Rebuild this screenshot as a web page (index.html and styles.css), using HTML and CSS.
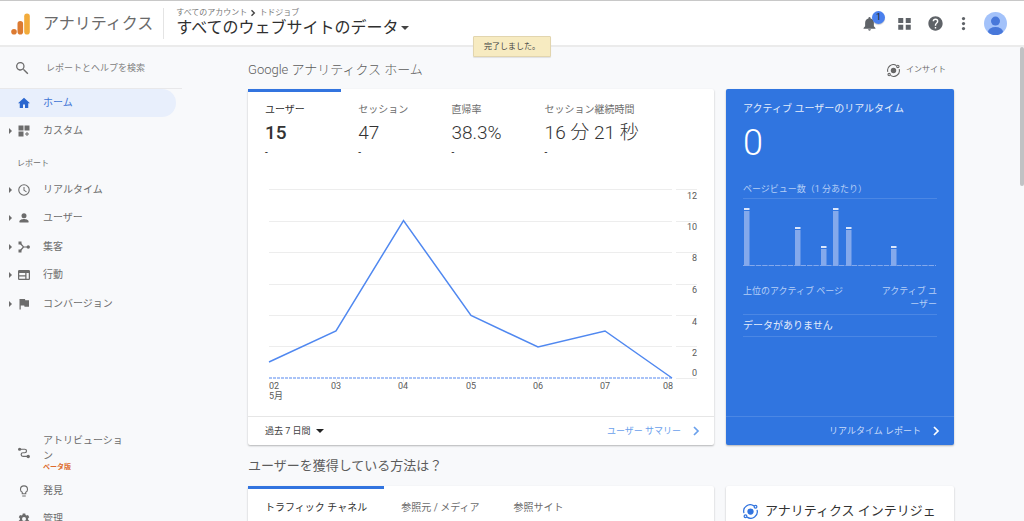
FILE: index.html
```html
<!DOCTYPE html>
<html lang="ja">
<head>
    <meta charset="UTF-8">
    <meta name="viewport" content="width=device-width, initial-scale=1.0">
    <title>アナリティクス</title>
    <link rel="stylesheet" href="styles.css">
</head>
<body>
    <header class="topbar">
        <a class="brand" href="#">
            <svg class="logo" viewBox="0 0 20 22">
                <circle cx="3" cy="18.7" r="2.8" fill="#dc7a31"/>
                <rect x="6.5" y="8" width="5.6" height="13.5" rx="2.8" fill="#dc7a31"/>
                <rect x="13.2" y="0.5" width="5.6" height="21" rx="2.8" fill="#f2ab3b"/>
            </svg>
            <span>アナリティクス</span>
        </a>
        <div class="account">
            <div class="account-path">すべてのアカウント
                <svg viewBox="0 0 6 8"><path d="M1.5 1.2L4.3 4L1.5 6.8" fill="none" stroke="#444" stroke-width="1.4"/></svg>
                トドジョブ</div>
            <button class="account-view">すべてのウェブサイトのデータ<span class="caret"></span></button>
        </div>
        <div class="actions">
            <button class="icon-btn bell" aria-label="通知">
                <svg viewBox="0 0 24 24"><path d="M12 23.5c1.3 0 2.2-.9 2.2-2.2H9.8c0 1.3.9 2.2 2.2 2.2zM19 16.5V11c0-3.6-2-6.3-5.3-7V3.2a1.7 1.7 0 0 0-3.4 0V4C7 4.700 5 7.400 5 11v5.500L2.500 19v1.200h19V19z"/></svg>
                <span class="badge">1</span>
            </button>
            <button class="icon-btn" aria-label="アプリ">
                <svg viewBox="0 0 24 24"><path d="M2 3h8v8H2zM14 3h8v8h-8zM2 14h8v8H2zM14 14h8v8h-8z"/></svg>
            </button>
            <button class="icon-btn" aria-label="ヘルプ">
                <svg viewBox="1.5 1.5 21 21"><path d="M12 2C6.5 2 2 6.5 2 12s4.5 10 10 10 10-4.5 10-10S17.5 2 12 2zm1 17h-2v-2h2v2zm2.1-7.8l-.9.9c-.7.8-1.2 1.4-1.2 2.9h-2v-.5c0-1.1.4-2.1 1.2-2.8l1.2-1.3c.4-.3.6-.8.6-1.4a2 2 0 0 0-4 0H8a4 4 0 0 1 8 0c0 .9-.4 1.7-.9 2.2z"/></svg>
            </button>
            <button class="icon-btn dots" aria-label="その他">
                <svg viewBox="0 0 24 24"><circle cx="12" cy="4" r="2.6"/><circle cx="12" cy="12" r="2.6"/><circle cx="12" cy="20" r="2.6"/></svg>
            </button>
            <button class="avatar" aria-label="アカウント">
                <svg viewBox="0 0 24 24">
                    <clipPath id="round"><circle cx="12" cy="12" r="12"/></clipPath>
                    <g clip-path="url(#round)">
                        <rect width="24" height="24" fill="#a3c2fa"/>
                        <circle cx="12" cy="9.5" r="4.7" fill="#4878da"/>
                        <ellipse cx="12" cy="20.5" rx="7.8" ry="4.8" fill="#4878da"/>
                    </g>
                </svg>
            </button>
        </div>
    </header>

    <div class="toast" role="status">完了しました。</div>

    <div class="layout">
        <nav class="sidebar">
            <label class="search">
                <svg viewBox="0 0 24 24"><path d="M15.5 14h-.8l-.3-.3A6.5 6.5 0 1 0 13.7 14.4l.3.3v.8l6 6 1.5-1.5zM9.5 14a4.5 4.5 0 1 1 0-9 4.5 4.5 0 0 1 0 9z"/></svg>
                <input type="text" placeholder="レポートとヘルプを検索" aria-label="レポートとヘルプを検索">
            </label>
            <ul class="menu">
                <li><a class="item active" href="#">
                    <span class="arrow hidden"></span>
                    <svg viewBox="0 0 24 24"><path d="M10 22v-7h4v7h6.5v-9.5H24L12 1.5 0 12.5h3.5V22z"/></svg>
                    ホーム</a></li>
                <li><a class="item" href="#">
                    <span class="arrow"></span>
                    <svg viewBox="0 0 24 24"><path d="M1 1h10v10H1zM13 1h10v10H13zM1 13h10v10H1zM17 14h2v3h3v2h-3v3h-2v-3h-3v-2h3z"/></svg>
                    カスタム</a></li>
            </ul>
            <div class="menu-title">レポート</div>
            <ul class="menu reports">
                <li><a class="item" href="#">
                    <span class="arrow"></span>
                    <svg viewBox="0 0 24 24"><circle cx="12" cy="12" r="10.5" fill="none" stroke="#6c6c6c" stroke-width="2.2"/><path d="M11 6h2v6l4.5 2.8-1 1.6L11 13z"/></svg>
                    リアルタイム</a></li>
                <li><a class="item" href="#">
                    <span class="arrow"></span>
                    <svg viewBox="0 0 24 24"><circle cx="12" cy="7.5" r="5"/><path d="M3 21v-2.5c0-3 6-4.5 9-4.5s9 1.5 9 4.5V21z"/></svg>
                    ユーザー</a></li>
                <li><a class="item" href="#">
                    <span class="arrow"></span>
                    <svg viewBox="0 0 24 24"><path d="M4 4l7 8h9M4 20l7-8" fill="none" stroke="#6c6c6c" stroke-width="2.4"/><path d="M1 1h6v6H1zM1 17h6v6H1z"/><circle cx="20.5" cy="12" r="3.4"/></svg>
                    集客</a></li>
                <li><a class="item" href="#">
                    <span class="arrow"></span>
                    <svg viewBox="0 0 24 24"><path d="M2.5 2h19A2.5 2.5 0 0 1 24 4.5v15a2.5 2.5 0 0 1-2.5 2.5h-19A2.5 2.5 0 0 1 0 19.5v-15A2.5 2.5 0 0 1 2.5 2zM2.5 8v4.5h12V8zM2.5 15v4.5h12V15zM17 8v11.5h4.5V8z" fill-rule="evenodd"/></svg>
                    行動</a></li>
                <li><a class="item" href="#">
                    <span class="arrow"></span>
                    <svg viewBox="0 0 24 24"><path d="M14.5 4.5L14 2H3v21h2.5v-8h7l.5 2.5h9v-13z"/></svg>
                    コンバージョン</a></li>
            </ul>
            <ul class="menu lower">
                <li><a class="item tall" href="#">
                    <span class="arrow hidden"></span>
                    <svg viewBox="0 0 24 24"><path d="M3 4.5h10.5a3.5 3.5 0 0 1 0 7H10a3.7 3.7 0 0 0 0 7.4h11" fill="none" stroke="#6c6c6c" stroke-width="2.4"/><circle cx="3.2" cy="4.5" r="3.2"/><circle cx="20.5" cy="19" r="3.4"/></svg>
                    <span class="wrap">アトリビューション<small>ベータ版</small></span></a></li>
                <li><a class="item" href="#">
                    <span class="arrow hidden"></span>
                    <svg viewBox="0 0 24 24"><path d="M8.5 17.5v-3C6.3 13.3 5 11.3 5 8.8a7 7 0 0 1 14 0c0 2.5-1.3 4.5-3.5 5.7v3z" fill="none" stroke="#6c6c6c" stroke-width="2.2"/><path d="M8.5 21h7v2h-7z"/></svg>
                    発見</a></li>
                <li><a class="item" href="#">
                    <span class="arrow hidden"></span>
                    <svg viewBox="0 0 24 24"><path d="M9.5 1h5l.6 3 2 1.2L20 4l2.5 4.3-2.3 2v3.4l2.3 2L20 20l-2.9-1.2-2 1.2-.6 3h-5l-.6-3-2-1.2L4 20l-2.5-4.3 2.3-2v-3.4l-2.3-2L4 4l2.9 1.2 2-1.2zM12 8a4 4 0 1 0 0 8 4 4 0 0 0 0-8z"/></svg>
                    管理</a></li>
            </ul>
        </nav>

        <main class="main">
            <div class="content">
                <div class="page-head">
                    <h1>Google アナリティクス ホーム</h1>
                    <button class="insight">
                        <svg viewBox="0 0 24 24"><g fill="none" stroke="#666" stroke-width="2"><path d="M1.5 14.5A10.5 10.5 0 0 1 17.5 3M22.5 9.5A10.5 10.5 0 0 1 6.5 21"/><circle cx="20" cy="4.5" r="2.2"/><circle cx="4" cy="19.5" r="2.2"/></g><circle cx="12" cy="12" r="5" fill="#666"/></svg>
                        インサイト
                    </button>
                </div>

                <div class="grid">
                    <section class="card overview">
                        <div class="metrics">
                            <button class="metric active"><span>ユーザー</span><strong>15</strong><em>-</em></button>
                            <button class="metric"><span>セッション</span><strong>47</strong><em>-</em></button>
                            <button class="metric"><span>直帰率</span><strong>38.3%</strong><em>-</em></button>
                            <button class="metric"><span>セッション継続時間</span><strong>16 分 21 秒</strong><em>-</em></button>
                        </div>
                        <svg class="chart" viewBox="0 0 466 240">
                            <g class="gridlines">
                                <path d="M21 13.5H424M428 13.5H449"/>
                                <path d="M21 45.5H424M428 45.5H449"/>
                                <path d="M21 76.5H424M428 76.5H449"/>
                                <path d="M21 108.5H424M428 108.5H449"/>
                                <path d="M21 139.5H424M428 139.5H449"/>
                                <path d="M21 170.5H424M428 170.5H449"/>
                                <path d="M428 202.5H449"/>
                                <path d="M88.5 203v3M155.5 203v3M223.5 203v3M290.5 203v3M357.5 203v3"/>
                            </g>
                            <g class="y-labels">
                                <text x="449" y="23">12</text>
                                <text x="449" y="54">10</text>
                                <text x="449" y="85">8</text>
                                <text x="449" y="117">6</text>
                                <text x="449" y="149">4</text>
                                <text x="449" y="180">2</text>
                                <text x="449" y="200">0</text>
                            </g>
                            <path class="previous" d="M21 202H424"/>
                            <path class="current" d="M21 186L88 155L155.5 44.5L223 139.5L290 171L357 155L424 202"/>
                            <g class="x-labels">
                                <text class="start" x="21" y="213">02</text>
                                <text class="start" x="21" y="223">5月</text>
                                <text x="88" y="213">03</text>
                                <text x="155" y="213">04</text>
                                <text x="223" y="213">05</text>
                                <text x="290" y="213">06</text>
                                <text x="357" y="213">07</text>
                                <text x="420" y="213">08</text>
                            </g>
                        </svg>
                        <div class="card-foot">
                            <button class="range">過去 7 日間<span class="caret"></span></button>
                            <a href="#">ユーザー サマリー
                                <svg viewBox="0 0 8 10"><path d="M2 1L6 5L2 9" fill="none" stroke="currentColor" stroke-width="1.7"/></svg></a>
                        </div>
                    </section>

                    <section class="card realtime">
                        <div class="realtime-body">
                            <h2>アクティブ ユーザーのリアルタイム</h2>
                            <div class="count">0</div>
                            <h3>ページビュー数（1 分あたり）</h3>
                            <svg class="bars" viewBox="0 0 194 68">
                                <path d="M0 66.5H193" stroke="#84a9ec" stroke-dasharray="5.4 1" fill="none"/>
                                <g fill="#84a9ec">
                                    <rect x="1" y="12" width="5.5" height="55"/>
                                    <rect x="52" y="31" width="5.5" height="36"/>
                                    <rect x="78" y="50" width="5.5" height="17"/>
                                    <rect x="90" y="12" width="5.5" height="55"/>
                                    <rect x="103" y="31" width="5.5" height="36"/>
                                    <rect x="148" y="50" width="5.5" height="17"/>
                                </g>
                                <g fill="#dbe6fb">
                                    <rect x="1" y="9" width="5.5" height="2"/>
                                    <rect x="52" y="28" width="5.5" height="2"/>
                                    <rect x="78" y="47" width="5.5" height="2"/>
                                    <rect x="90" y="9" width="5.5" height="2"/>
                                    <rect x="103" y="28" width="5.5" height="2"/>
                                    <rect x="148" y="47" width="5.5" height="2"/>
                                </g>
                            </svg>
                            <table>
                                <thead>
                                    <tr><th>上位のアクティブ ページ</th><th class="users">アクティブ ユーザー</th></tr>
                                </thead>
                                <tbody>
                                    <tr><td colspan="2">データがありません</td></tr>
                                </tbody>
                            </table>
                        </div>
                        <div class="card-foot">
                            <a href="#">リアルタイム レポート
                                <svg viewBox="0 0 8 10"><path d="M2 1L6 5L2 9" fill="none" stroke="#fff" stroke-width="1.7"/></svg></a>
                        </div>
                    </section>

                    <h2 class="section-title">ユーザーを獲得している方法は？</h2>

                    <section class="card">
                        <div class="tabs">
                            <button class="tab active">トラフィック チャネル</button>
                            <button class="tab">参照元 / メディア</button>
                            <button class="tab">参照サイト</button>
                        </div>
                    </section>

                    <section class="card intelligence">
                        <svg viewBox="0 0 24 24"><g fill="none" stroke="#3274df" stroke-width="2"><path d="M1.5 14.5A10.5 10.5 0 0 1 17.5 3M22.5 9.5A10.5 10.5 0 0 1 6.5 21"/><circle cx="20" cy="4.5" r="2.2"/><circle cx="4" cy="19.5" r="2.2"/></g><circle cx="12" cy="12" r="5" fill="#3274df"/></svg>
                        <h2>アナリティクス インテリジェンス</h2>
                    </section>
                </div>
            </div>
            <div class="scrollbar"></div>
        </main>
    </div>
</body>
</html>
```
FILE: styles.css
```css
* {
    box-sizing: border-box;
}

body {
    margin: 0;
    height: 100vh;
    display: flex;
    flex-direction: column;
    overflow: hidden;
    background: #f8f9fb;
    color: #6c6c6c;
    font-family: Roboto, "Noto Sans CJK JP", sans-serif;
    font-size: 10px;
    line-height: 14px;
}

h1, h2, h3, ul {
    margin: 0;
    padding: 0;
    font-weight: 400;
}

a {
    color: inherit;
    text-decoration: none;
}

button {
    padding: 0;
    border: none;
    background: none;
    color: inherit;
    font: inherit;
    cursor: pointer;
}

svg {
    display: block;
    flex-shrink: 0;
    fill: #6c6c6c;
}

/* Top bar */
.topbar {
    display: flex;
    flex-shrink: 0;
    align-items: center;
    height: 47px;
    padding: 1px 17px 0 11px;
    background: #fff;
    border-top: 1px solid #c8c8c8;
    border-bottom: 2px solid #ebebeb;
}

.brand {
    display: flex;
    align-items: center;
    gap: 12px;
    color: #6a6a6a;
    font-size: 16px;
}

.logo {
    width: 20px;
    height: 22px;
}

.account {
    margin-left: 10px;
    padding-left: 12px;
    border-left: 1px solid #e4e4e4;
}

.account-path {
    display: flex;
    align-items: center;
    gap: 3px;
    height: 9px;
    color: #777;
    font-size: 8px;
    line-height: 9px;
}

.account-path svg {
    width: 6px;
    height: 8px;
}

.account-view {
    display: flex;
    align-items: center;
    gap: 2px;
    height: 22px;
    color: #2f2f2f;
    font-size: 16px;
    line-height: 22px;
}

.caret {
    border: 4px solid transparent;
    border-top-color: #444;
    border-bottom: none;
}

.actions {
    display: flex;
    align-items: center;
    gap: 16px;
    margin-left: auto;
}

.icon-btn {
    position: relative;
}

.icon-btn svg {
    width: 15px;
    height: 15px;
    fill: #5f6368;
}

.bell {
    width: 19px;
}

.dots {
    display: flex;
    justify-content: center;
    width: 9px;
}

.badge {
    position: absolute;
    top: -5px;
    right: -4px;
    width: 13px;
    height: 13px;
    border-radius: 50%;
    background: #4a80ee;
    color: #222;
    font-size: 9px;
    line-height: 13px;
    box-shadow: 0 1px 1px rgba(0, 0, 0, 0.2);
}

.avatar svg {
    width: 23px;
    height: 23px;
}

.toast {
    position: absolute;
    top: 36px;
    left: 50%;
    transform: translateX(-50%);
    padding: 3px 10px;
    border: 1px solid #e2d5ae;
    border-radius: 1px;
    background: #f7ebc1;
    color: #444;
    font-size: 8px;
    line-height: 13px;
    box-shadow: 0 1px 1px rgba(0, 0, 0, 0.1);
}

/* Sidebar */
.layout {
    display: flex;
    flex: 1;
    min-height: 0;
}

.sidebar {
    flex: 0 0 182px;
    overflow: hidden;
}

.search {
    display: flex;
    align-items: center;
    gap: 16px;
    height: 42px;
    padding-left: 14px;
    border-bottom: 1px solid #e8e8ea;
}

.search svg {
    width: 16px;
    height: 16px;
}

.search input {
    flex: 1;
    min-width: 0;
    padding: 0;
    border: none;
    outline: none;
    background: none;
    font: inherit;
    font-size: 9px;
}

.search input::placeholder {
    color: #808080;
}

.menu {
    list-style: none;
}

.item {
    display: flex;
    align-items: center;
    height: 28px;
    width: 176px;
    border-radius: 0 14px 14px 0;
}

.item svg {
    width: 12px;
    height: 12px;
    margin: 0 13px 0 6px;
}

.item.active {
    background: #e8effc;
    color: #3f75d6;
}

.item.active svg {
    fill: #2a67cf;
}

.arrow {
    margin-left: 9px;
    border: 3px solid transparent;
    border-left-color: #6c6c6c;
    border-right: none;
}

.arrow.hidden {
    visibility: hidden;
}

.menu-title {
    padding: 12px 17px 5px;
    font-size: 8px;
    line-height: 14px;
}

.reports {
    display: grid;
    grid-auto-rows: 1fr;
    height: 142px;
}

.lower {
    margin-top: 111px;
}

.item.tall {
    height: 48px;
}

.wrap {
    width: 82px;
    padding-bottom: 2px;
    line-height: 15px;
}

.wrap small {
    display: block;
    color: #dd6b2c;
    font-size: 7px;
    font-weight: 700;
    line-height: 8px;
}

/* Main area */
.main {
    position: relative;
    flex: 1;
    min-width: 0;
    padding: 0 70px 0 66px;
    overflow: hidden;
}

.scrollbar {
    position: absolute;
    top: 0;
    right: 0;
    width: 4px;
    height: 139px;
    border-radius: 2px;
    background: #c1c2c4;
}

.content {
    max-width: 1100px;
    margin: 0 auto;
}

.page-head {
    display: flex;
    justify-content: space-between;
    align-items: center;
    height: 42px;
    padding: 4px 8px 0 0;
}

.page-head h1,
.section-title {
    color: #5c5c5c;
    font-size: 13px;
    line-height: 18px;
}

.page-head h1 {
    font-weight: 300;
}

.insight {
    display: flex;
    align-items: center;
    gap: 6px;
    font-size: 8px;
}

.insight svg {
    width: 13px;
    height: 13px;
}

.grid {
    display: grid;
    grid-template-columns: 466fr 228fr;
    column-gap: 12px;
}

.card {
    display: flex;
    flex-direction: column;
    border-radius: 2px;
    background: #fff;
    box-shadow: 0 1px 2px rgba(0, 0, 0, 0.28);
}

.metrics {
    display: grid;
    grid-template-columns: repeat(5, minmax(0, 1fr));
}

.metric {
    padding: 11px 0 0 17px;
    border-top: 3px solid transparent;
    text-align: left;
    white-space: nowrap;
}

.metric span,
.metric strong,
.metric em {
    display: block;
}

.metric strong {
    color: #333;
    font-size: 19px;
    font-weight: 300;
    line-height: 32px;
}

.metric em {
    color: #222;
    font-style: normal;
    line-height: 8px;
}

.metric.active,
.tab.active {
    border-top-color: #3274df;
    color: #2f2f2f;
}

.metric.active strong {
    font-weight: 500;
}

.chart {
    width: 100%;
    margin-top: 19px;
}

.chart text {
    fill: #5a5a5a;
    font-size: 9px;
}

.gridlines {
    stroke: #ededed;
}

.y-labels {
    text-anchor: end;
}

.x-labels {
    text-anchor: middle;
}

.x-labels .start {
    text-anchor: start;
}

.current {
    fill: none;
    stroke: #5088f0;
    stroke-width: 1.5;
}

.previous {
    stroke: #8db0f5;
    stroke-width: 1.5;
    stroke-dasharray: 3 1;
}

.card-foot {
    display: flex;
    align-items: center;
    justify-content: space-between;
    height: 29px;
    margin-top: auto;
    padding: 0 14px 0 17px;
    border-top: 1px solid #e6e6e6;
}

.card-foot a {
    display: flex;
    align-items: center;
    gap: 11px;
    margin-left: auto;
    color: #6aa0ec;
    font-size: 9px;
}

.card-foot svg {
    width: 8px;
    height: 10px;
}

.range {
    display: flex;
    align-items: center;
    gap: 5px;
    color: #444;
    font-size: 9px;
}

.range .caret {
    border-top-color: #222;
}

/* Realtime card */
.realtime {
    background: #3075e0;
    color: #e3ecfb;
}

.realtime-body {
    padding: 13px 17px 0;
}

.realtime h2 {
    font-size: 10px;
}

.count {
    margin: 9px 0 21px;
    color: #fff;
    font-size: 36px;
    font-weight: 300;
    line-height: 36px;
}

.realtime h3 {
    padding-bottom: 2px;
    border-bottom: 1px solid #4b87e4;
    color: #b5cef6;
    font-size: 9px;
}

.bars {
    width: 100%;
}

.realtime table {
    width: 100%;
    margin-top: 18px;
    border-collapse: collapse;
}

.realtime th,
.realtime td {
    padding: 0;
    border-bottom: 1px solid #4b87e4;
    text-align: left;
    vertical-align: top;
}

.realtime th {
    padding-bottom: 3px;
    color: #b5cef6;
    font-size: 9px;
    font-weight: 400;
    line-height: 13px;
}

.realtime td {
    line-height: 21px;
}

.realtime .users {
    width: 58px;
    text-align: right;
    line-break: anywhere;
}

.realtime .card-foot {
    border-top-color: #4b87e4;
}

.realtime .card-foot a {
    color: #c9dbf9;
}

/* Acquisition row */
.section-title {
    grid-column: 1 / -1;
    padding: 12px 0 11px;
}

.tabs {
    display: flex;
    height: 80px;
}

.tab {
    height: 40px;
    padding: 0 17px;
    border-top: 3px solid transparent;
}

.intelligence {
    flex-direction: row;
    gap: 7px;
    padding: 15px 17px;
}

.intelligence svg {
    width: 15px;
    height: 15px;
    margin-top: 3px;
}

.intelligence h2 {
    color: #333;
    font-size: 13px;
    line-height: 20px;
    line-break: anywhere;
}
```
